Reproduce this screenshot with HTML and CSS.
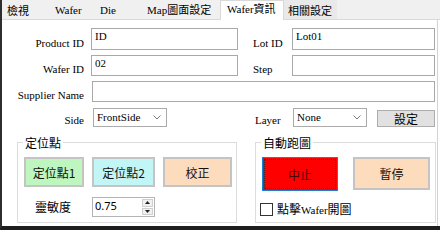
FILE: index.html
```html
<!DOCTYPE html>
<html>
<head>
<meta charset="utf-8">
<link rel="stylesheet" href="styles.css">
</head>
<body>
<div class="window">
  <div class="tabs">
    <div class="tab t1">檢視</div>
    <div class="tab t2">Wafer</div>
    <div class="tab t3">Die</div>
    <div class="tab t4">Map圖面設定</div>
    <div class="tab t5 active">Wafer資訊</div>
    <div class="tab t6">相關設定</div>
  </div>
  <div class="panel">
    <div class="form">
      <div class="lbl">Product ID</div>
      <div class="input in-left">ID</div>
      <div class="lbl2">Lot ID</div>
      <div class="input in-right">Lot01</div>

      <div class="lbl">Wafer ID</div>
      <div class="input in-left">02</div>
      <div class="lbl2">Step</div>
      <div class="input in-right"></div>

      <div class="lbl">Supplier Name</div>
      <div class="input in-wide"></div>

      <div class="lbl">Side</div>
      <div class="select sel-side"><span>FrontSide</span><svg class="chev" width="8" height="5" viewBox="0 0 8 5"><polyline points="0.5,0.5 4,4 7.5,0.5" fill="none" stroke="#7a7a7a" stroke-width="1"/></svg></div>
      <div class="lbl2 lbl-layer">Layer</div>
      <div class="layer-row">
        <div class="select sel-layer"><span>None</span><svg class="chev" width="8" height="5" viewBox="0 0 8 5"><polyline points="0.5,0.5 4,4 7.5,0.5" fill="none" stroke="#7a7a7a" stroke-width="1"/></svg></div>
        <div class="sbtn">設定</div>
      </div>
    </div>
    <div class="groups">
      <fieldset class="group g1">
        <legend>定位點</legend>
        <div class="btn-row">
          <div class="cbtn green w60">定位點1</div>
          <div class="cbtn cyan w63">定位點2</div>
          <div class="cbtn peach w69">校正</div>
        </div>
        <div class="sens-row">
          <span class="sens-lbl">靈敏度</span>
          <div class="numeric">
            <span class="num-val">0.75</span>
            <div class="spin">
              <div class="spin-btn"><svg width="5" height="3" viewBox="0 0 5 3"><polygon points="2.5,0 5,3 0,3" fill="#222"/></svg></div>
              <div class="spin-btn"><svg width="5" height="3" viewBox="0 0 5 3"><polygon points="0,0 5,0 2.5,3" fill="#222"/></svg></div>
            </div>
          </div>
        </div>
      </fieldset>
      <fieldset class="group g2">
        <legend>自動跑圖</legend>
        <div class="btn-row">
          <div class="cbtn red">中止</div>
          <div class="cbtn peach pause">暫停</div>
        </div>
        <div class="chk-row">
          <span class="chk"></span>
          <span class="chk-lbl">點擊<span class="lat">Wafer</span>開圖</span>
        </div>
      </fieldset>
    </div>
  </div>
</div>
</body>
</html>
```
FILE: styles.css
```css
* { box-sizing: border-box; }
html, body { margin: 0; padding: 0; background: #ffffff; }
body { width: 440px; height: 230px; overflow: hidden; }

.window {
  width: 440px;
  height: 230px;
  border-left: 2px solid #2e2e2e;
  border-bottom: 4px solid #1e1e1e;
  background: #ffffff;
  display: flex;
  flex-direction: column;
  font-family: "Liberation Serif", "Noto Sans CJK TC", serif;
  color: #000;
}

.tabs {
  height: 20px;
  flex: none;
  display: flex;
  background: #f0f0f0;
  border-bottom: 1px solid #d9d9d9;
  font-size: 11px;
}
.tab {
  height: 19px;
  padding-top: 3px;
  line-height: 14px;
  white-space: nowrap;
  color: #000;
}
.t1 { width: 38px; padding-left: 5px; font-family: "Noto Sans CJK TC", sans-serif; }
.t2 { width: 53px; padding-left: 15px; }
.t3 { width: 40px; padding-left: 7px; }
.t4 { width: 87px; padding-left: 14px; }
.t5 { width: 64px; padding-left: 6px; }
.t6 { width: 53px; padding-left: 4px; font-family: "Noto Sans CJK TC", sans-serif; background: #e9e9e9; }
.tab.active {
  background: #ffffff;
  height: 20px;
  padding-top: 1px;
  border-left: 1px solid #d9d9d9;
  border-right: 1px solid #d9d9d9;
  border-top: 1px solid #d9d9d9;
}

.panel {
  flex: 1;
  margin-right: 2px;
  border-right: 1px solid #d3d3d3;
  display: flex;
  flex-direction: column;
}

.form {
  margin-top: 8px;
  display: grid;
  grid-template-columns: 89px 162px 39px 143px;
  grid-template-rows: 22px 21px 21px 20px;
  row-gap: 5px;
  font-size: 11px;
}
.lbl {
  align-self: end;
  text-align: right;
  padding-right: 7px;
  line-height: 13px;
  white-space: nowrap;
}
.lbl2 {
  align-self: end;
  line-height: 13px;
  white-space: nowrap;
}
.lbl-layer { padding-left: 2px; }

.input {
  border: 1px solid #a9a9a9;
  background: #fff;
  padding: 1px 3px;
  line-height: 13px;
  font-size: 11px;
}
.in-left { width: 147px; }
.in-right { width: 143px; }
.in-wide { grid-column: 2 / 5; margin-left: 1px; }

.select {
  align-self: end;
  height: 19px;
  width: 74px;
  border: 1px solid #ababab;
  background: #fff;
  display: flex;
  align-items: center;
  justify-content: space-between;
  padding: 0 5px 0 3px;
  line-height: 13px;
}
.sel-side { margin-left: 2px; }
.sel-layer { margin-left: 1px; }
.chev { display: block; }

.layer-row {
  display: flex;
  align-items: flex-end;
  gap: 10px;
}
.sbtn {
  width: 58px;
  height: 17px;
  background: #e1e1e1;
  border: 1px solid #adadad;
  font-family: "Noto Sans CJK TC", sans-serif;
  font-size: 12px;
  line-height: 15px;
  text-align: center;
}

.groups {
  margin-top: 7px;
  padding-left: 15px;
  display: flex;
  gap: 18px;
}
.group {
  margin: 0;
  padding: 0 0 0 6px;
  border: 1px solid #dcdcdc;
  height: 89px;
  min-width: 0;
}
.g1 { width: 220px; }
.g2 { width: 181px; }
.group legend {
  margin-left: -1px;
  padding: 0 2px;
  font-family: "Noto Sans CJK TC", sans-serif;
  font-size: 12px;
  line-height: 17px;
}

.btn-row {
  margin-top: 6px;
  display: flex;
  gap: 8px;
  align-items: flex-start;
}
.cbtn {
  height: 30px;
  border: 2px solid #c4c4c4;
  font-family: "Noto Sans CJK TC", sans-serif;
  font-size: 12px;
  display: flex;
  align-items: center;
  justify-content: center;
  color: #111;
}
.w60 { width: 60px; }
.w63 { width: 63px; }
.w69 { width: 69px; }
.green { background: #bff5bf; }
.cyan { background: #c2f6f6; }
.peach { background: #fddcbd; }
.red {
  width: 76px;
  height: 34px;
  background: #ff0000;
  border: 1px solid #1c7fd0;
  outline: 1px dotted #5a2020;
  outline-offset: -3px;
  color: #4a0000;
}
.pause {
  width: 77px;
  height: 33px;
  margin-left: 7px;
}

.sens-row {
  margin-top: 10px;
  display: flex;
  align-items: center;
  height: 20px;
}
.sens-lbl {
  margin-left: 11px;
  width: 57px;
  font-family: "Noto Sans CJK TC", sans-serif;
  font-size: 12px;
  line-height: 16px;
}
.numeric {
  width: 63px;
  height: 20px;
  border: 1px solid #b4b4b4;
  background: #fff;
  display: flex;
  justify-content: space-between;
  padding: 1px 1px 1px 2px;
}
.num-val {
  font-family: "Noto Sans", "Liberation Sans", sans-serif;
  font-size: 11px;
  line-height: 13px;
}
.spin {
  width: 11px;
  display: flex;
  flex-direction: column;
  gap: 1px;
}
.spin-btn {
  flex: 1;
  background: #f0f0f0;
  border: 1px solid #cfcfcf;
  display: flex;
  align-items: center;
  justify-content: center;
}
.spin-btn svg { display: block; }

.chk-row {
  margin-top: 11px;
  display: flex;
  align-items: center;
  height: 15px;
}
.chk {
  width: 13px;
  height: 13px;
  border: 1px solid #333;
  background: #fff;
  margin-left: -2px;
}
.chk-lbl {
  margin-left: 4px;
  font-family: "Noto Sans CJK TC", sans-serif;
  font-size: 12px;
  line-height: 15px;
}
.lat {
  font-family: "Liberation Serif", serif;
  font-size: 11px;
}
```
